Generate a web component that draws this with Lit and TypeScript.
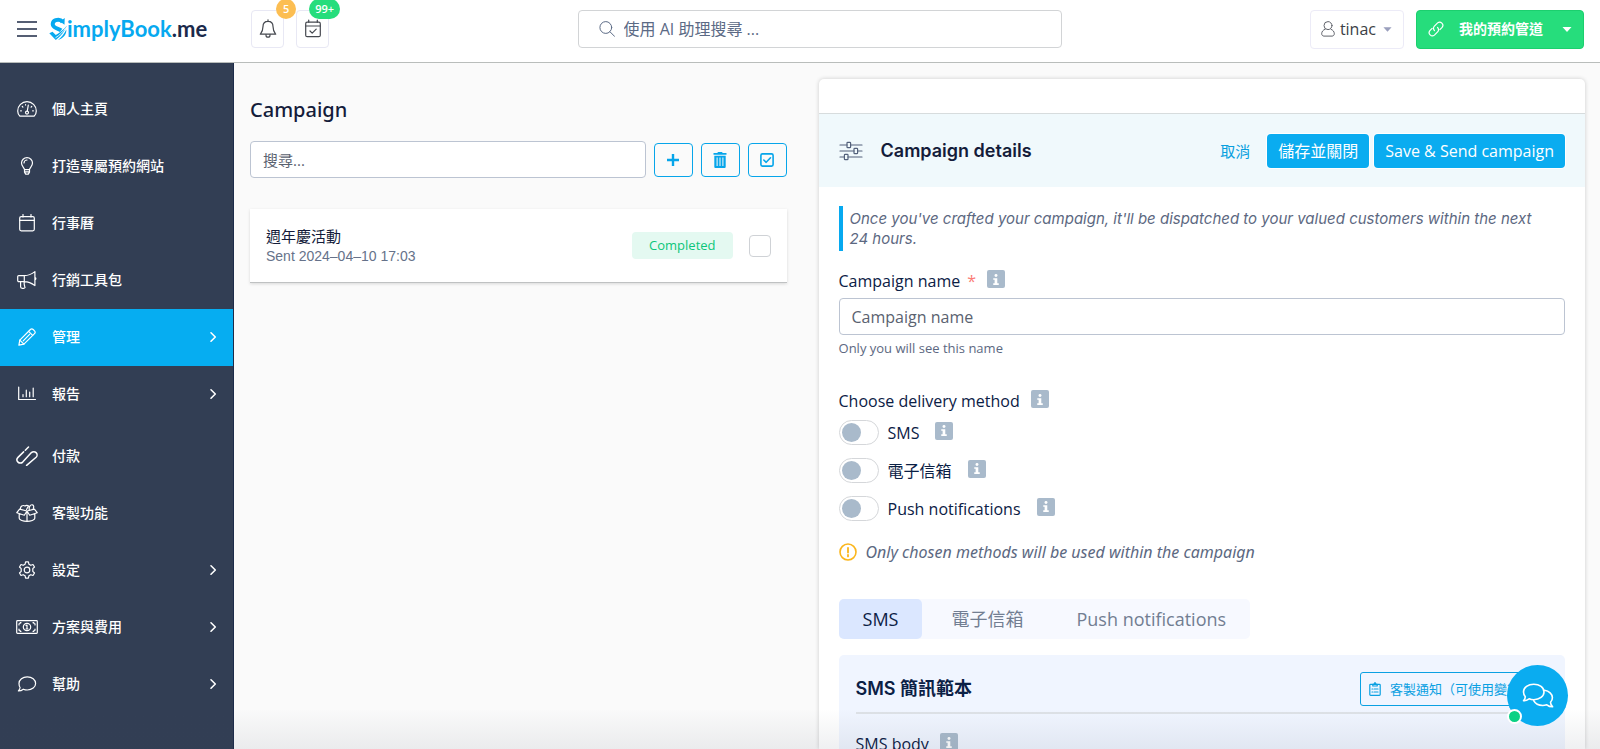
import { LitElement, html, css, svg, nothing } from "lit";
import { customElement, state } from "lit/decorators.js";
import { classMap } from "lit/directives/class-map.js";

const icon = (viewBox: string, body: unknown, cls = "") =>
  html`<svg class=${`icon ${cls}`} viewBox=${viewBox} aria-hidden="true">${body}</svg>`;

const icons = {
  gauge: icon("0 0 20 16", svg`
    <path d="M3 15.2C1.5 13.8 .7 12 .7 9.9a9.3 9.3 0 0 1 18.6 0c0 2.100-.8 3.900-2.300 5.300z"/>
    <path d="M11.300 4.200 10.300 10"/><circle cx="10" cy="11.600" r="1.500"/>
    <path d="M3.600 9.800h.8M15.600 9.800h.8M5.300 5.500l.6.6M8.600 3.700v.4M14.700 5.500l-.6.6"/>`),
  bulb: icon("0 0 20 18", svg`
    <path d="M7.500 12.600c0-1.900-3-3.200-3-6.500a5.500 5.500 0 0 1 11 0c0 3.300-3 4.600-3 6.500z"/>
    <path d="M7.500 12.600v2.500l1.200 2h2.600l1.200-2v-2.500M7.500 14.800h5M7 6a3 3 0 0 1 3-3"/>`),
  calendar: icon("0 0 20 18", svg`
    <rect x="2.700" y="2.600" width="14.600" height="14.200" rx="1.500"/><path d="M2.700 6.300h14.600M6 .5v2.500M14 .5v2.500"/>`),
  horn: icon("0 0 20 18", svg`
    <path d="M1.700 4.600h5.600c4 0 7.500-1.600 10.600-4v14c-3.100-2.400-6.600-4-10.600-4H1.700c-.6 0-1-.5-1-1V5.600c0-.6.4-1 1-1zM7.300 4.600v6M3.600 10.600v5.200c0 1 .8 1.500 1.700 1.500h1.500c1 0 1.500-.8 1-1.600-.6-1.500-.8-3.400-.5-5.100M17.900 6.300c1.300.3 1.300 2.300 0 2.600"/>`),
  pencil: icon("0 0 18 18", svg`
    <path d="M.9 17.100l.9-5L12.400 1.500a2 2 0 0 1 2.800 0l1.300 1.300a2 2 0 0 1 0 2.800L5.900 16.200z"/>
    <path d="M10.600 3.300l4.100 4.100M1.800 12.100l4.100 4.100M5.200 12.800l6.400-6.400"/>`),
  chart: icon("0 0 20 16", svg`
    <path d="M1.700 1v12.500h16.800"/><path d="M6 10.700V8.500M9.300 10.700V4.200M12.700 10.700V6M16.200 10.700V2"/>`),
  clip: icon("0 0 22 20", svg`
    <path class="bold" d="M12.500 1 9.300 4.200M7.600 5.900 2 11.400a3.300 3.300 0 0 0 4.700 4.700L15.400 6.600a3.300 3.300 0 0 1 4.700 4.700L10.600 19.400"/>`, "wide"),
  gift: icon("0 0 22 18", svg`
    <path d="M11 7 3.600 5.200.8 8.700l7.500 2.500zM11 7l7.400-1.800 2.800 3.500-7.500 2.500zM11 7v10.300M3.200 9.800v4.500c0 1.800 4 3 7.800 3s7.800-1.200 7.800-3V9.800"/>
    <path d="M4.500 5.300C4 2.500 6.800.6 9 2c1-.9 2.600-1 3.500 0l-2 3.500M13.300 5.800c-.6-2.800 1-5.300 3-5 1.500.3 1.700 2 1 3.700"/>`, "wide"),
  gear: icon("0 0 18 18", svg`
    <path d="M7.600.9h2.800l.5 2.300 1.900 1.100 2.200-.8 1.500 2.500-1.700 1.600v2.800l1.700 1.600-1.500 2.500-2.200-.8-1.900 1.100-.5 2.300H7.600l-.5-2.300-1.900-1.100-2.200.8L1.500 12l1.700-1.600V7.600L1.500 6 3 3.500l2.200.8 1.900-1.100z"/>
    <circle cx="9" cy="9" r="2.800"/>`),
  money: icon("0 0 22 14", svg`
    <rect x=".7" y=".7" width="20.600" height="12.600" rx=".8"/><circle cx="11" cy="7" r="3.700"/>
    <path d="M11 9V5l-1 .5M10 9h2M3 5V3.800c.8 0 1.200-.4 1.200-1.100H5M19 5V3.800c-.8 0-1.200-.4-1.200-1.100H17M3 9v1.200c.8 0 1.200.4 1.200 1.100H5M19 9v1.200c-.8 0-1.200.4-1.200 1.100H17"/>`, "wide"),
  bubble: icon("0 0 20 16", svg`
    <path d="M10.300.8c4.700 0 8.300 2.900 8.300 6.600S15 14 10.300 14c-1.500 0-2.800-.3-4-.8-1.300 1.100-3 1.700-4.900 1.700 1-1 1.600-2.200 1.700-3.400C2.300 10.300 2 8.900 2 7.400 2 3.700 5.600.8 10.300.8z"/>`),
  chevron: icon("0 0 8 12", svg`<path class="mid" d="M2 1.800 6.300 6 2 10.200"/>`, "chev"),
  burger: icon("0 0 20 18", svg`<path d="M0 2h20M0 9h20M0 16h20"/>`, "burger"),
  bell: icon("0 0 18 20", svg`
    <path d="M9 2.300c-3.200 0-5 2.200-5 5.200 0 4.500-1.500 6.200-2.700 7.700h15.400C15.500 13.700 14 12 14 7.500c0-3-1.800-5.200-5-5.200zM9 .8v1.500M7 16.200a2 2 0 0 0 4 0"/>`),
  calCheck: icon("0 0 18 20", svg`
    <rect x="1.700" y="3.200" width="14.600" height="14.500" rx="1.500"/><path d="M1.700 7h14.600M4.700 1v2.200M13.300 1v2.200M6 12l2.200 2.200 4-4"/>`),
  search: icon("0 0 16 16", svg`<circle cx="6.800" cy="6.500" r="5.900"/><path d="M11 10.800 15.600 15.400"/>`, "thin"),
  user: icon("0 0 14 16", svg`
    <circle cx="7" cy="4.600" r="4"/><path d="M4 8.300C2 9 .7 10.600.7 12.800c0 1.400 1 2.300 2.300 2.300h8c1.300 0 2.300-.9 2.300-2.300 0-2.200-1.300-3.800-3.300-4.500"/>`, "thin"),
  link: icon("0 0 16 16", svg`
    <path d="M6.400 9.500a3.100 3.100 0 0 1 0-4.400l3.200-3.200a3.200 3.200 0 0 1 4.500 4.500l-2.200 2.200M9.600 6.500a3.100 3.100 0 0 1 0 4.400l-3.200 3.200a3.200 3.200 0 0 1-4.500-4.500l2.200-2.200"/>`),
  caret: icon("0 0 10 5", svg`<path class="fill" d="M.5 0h9L5 5z"/>`, "caret"),
  plus: icon("0 0 14 14", svg`<path class="fill" d="M5.800 1h2.400v4.800H13v2.400H8.200V13H5.800V8.200H1V5.800h4.800z"/>`),
  trash: icon("0 0 14 16", svg`
    <path class="fill" fill-rule="evenodd" d="M.5 1h3.800L5 0h4l.7 1h3.800v1.800H.5zM1.300 3.700h11.400v11c0 .8-.5 1.300-1.300 1.300H2.600c-.8 0-1.300-.5-1.300-1.300zM3.600 5.500v8.500h1V5.500zM6.500 5.500v8.500h1V5.500zM9.400 5.500v8.500h1V5.500z"/>`),
  tick: icon("0 0 14 14", svg`<rect class="mid" x=".9" y=".9" width="12.200" height="12.200" rx="1.500"/><path class="mid" d="M3.800 7l2.400 2.300 4.300-4.500"/>`),
  sliders: icon("0 0 22 20", svg`
    <path d="M0 4h7M11 4h11M0 10h14M18 10h4M0 16h4M8 16h14"/>
    <rect x="7" y="1.300" width="3.600" height="5.400" rx=".8"/><rect x="14" y="7.300" width="3.600" height="5.400" rx=".8"/><rect x="4.400" y="13.300" width="3.600" height="5.400" rx=".8"/>`),
  alert: icon("0 0 18 18", svg`<circle class="mid" cx="9" cy="9" r="8"/><path class="heavy" d="M9 4.800v4.700M9 11.800v1.600"/>`),
  clipboard: icon("0 0 12 14", svg`
    <rect x=".8" y="2.300" width="10.400" height="11" rx=".8"/><path d="M3.800 2.300V4h4.400V2.300M5 1.800 6 .6l1 1.200M3 7h.8M5.200 7h3.800M3 10h.8M5.200 10h3.800"/>`),
  chat: icon("0 0 32 26", svg`
    <path class="mid" d="M11.800 1.200C17.500 1.200 22 4.700 22 9s-4.500 7.700-10.200 7.700c-1.700 0-3.300-.3-4.700-.9-1.500 1.100-3.500 1.900-5.600 1.900 1.200-1.200 1.800-2.600 1.800-4C2.100 12.400 1.500 10.800 1.500 9c0-4.300 4.600-7.800 10.300-7.800z"/>
    <path class="mid" d="M22.500 7.300C27 8 30.400 11 30.400 14.700c0 1.700-.7 3.300-1.900 4.500 0 1.400.7 3.100 2.100 4.600-2.300 0-4.400-.8-5.800-2-1.300.4-2.700.7-4.100.7-4 0-7.500-2-9-4.800"/>`),
};

interface NavItem { label: string; glyph: unknown; more?: boolean; active?: boolean }

const primaryNav: NavItem[] = [
  { label: "個人主頁", glyph: icons.gauge },
  { label: "打造專屬預約網站", glyph: icons.bulb },
  { label: "行事曆", glyph: icons.calendar },
  { label: "行銷工具包", glyph: icons.horn },
  { label: "管理", glyph: icons.pencil, more: true, active: true },
  { label: "報告", glyph: icons.chart, more: true },
];
const secondaryNav: NavItem[] = [
  { label: "付款", glyph: icons.clip },
  { label: "客製功能", glyph: icons.gift },
  { label: "設定", glyph: icons.gear, more: true },
  { label: "方案與費用", glyph: icons.money, more: true },
  { label: "幫助", glyph: icons.bubble, more: true },
];
const methods = ["SMS", "電子信箱", "Push notifications"];

const info = (about: string) => html`
  <button class="info" type="button" aria-label=${about}>
    <svg class="info-glyph" viewBox="0 0 8 12" aria-hidden="true">
      <circle cx="4" cy="1.700" r="1.600"/><path d="M1 4.500h4.400v5.500H7V12H1v-2h1.500V6.400H1z"/>
    </svg>
  </button>`;

@customElement("app-root")
export class AppRoot extends LitElement {
  @state() private tab = 0;

  static styles = css`
    :host {
      display: flex; flex-direction: column; height: 100vh; overflow: hidden;
      position: relative; background: #fafafa; color: #0b2045;
      font: 16px/20px "Open Sans", "Noto Sans CJK TC", sans-serif;
    }
    *, *::before { box-sizing: border-box; }
    button, input { font: inherit; color: inherit; margin: 0; }
    button { cursor: pointer; padding: 0; background: none; border: 0; }
    a { text-decoration: none; color: inherit; }
    h1, h2, h3, p, ul { margin: 0; padding: 0; font-weight: 500; }
    .icon { display: block; flex: none; fill: none; stroke: currentColor; stroke-width: 1.200; stroke-linecap: round; stroke-linejoin: round; }
    .icon .fill { fill: currentColor; stroke: none; }
    .icon .mid { stroke-width: 1.600; }
    .icon .heavy { stroke-width: 1.800; }
    .icon .bold { stroke-width: 1.500; }
    .thin { stroke-width: 1; }

    .top {
      flex: none; display: flex; align-items: center; justify-content: space-between;
      height: 63px; padding: 0 16px 4px 17px; background: #fff; border-bottom: 1px solid #b9bdbb;
    }
    .group { display: flex; align-items: center; }
    .burger { width: 20px; height: 18px; stroke-width: 1.500; color: #1e2a45; stroke-linecap: butt; }
    .brand { display: flex; align-items: center; margin: 0 44px 0 12px; font: 700 22px/26px Lato, sans-serif; color: #1b2a4b; }
    .brand-mark { width: 18px; height: 26px; }
    .brand-blue { color: #06a9f0; }
    .tool { position: relative; display: grid; place-items: center; width: 33px; height: 38px; margin-right: 12px; border: 1px solid #e8e8f4; border-radius: 4px; color: #45484f; }
    .tool:last-child { margin-right: 0; }
    .tool .icon { width: 18px; height: 20px; }
    .count { position: absolute; left: 24px; top: -12px; min-width: 20px; height: 20px; padding: 0 6px; border-radius: 10px; background: #fcbe52; color: #fff; font-size: 11px; line-height: 20px; font-weight: 600; }
    .count.green { left: 12px; background: #26dd7c; }
    .search { display: flex; align-items: center; gap: 9px; flex: 0 1 484px; height: 38px; padding: 0 20px; background: #fff; border: 1px solid #d2d4d6; border-radius: 4px; color: #5b6a85; }
    .search .icon { width: 16px; height: 16px; }
    .search-input { flex: 1; min-width: 0; border: 0; outline: 0; padding: 0; background: none; }
    .search-input::placeholder { color: #5b6a85; opacity: 1; }
    .account { display: flex; align-items: center; gap: 5px; height: 39px; padding: 0 11px 0 10px; border: 1px solid #ecebf7; border-radius: 4px; color: #3c3f46; margin-right: 12px; }
    .account .icon { width: 14px; height: 16px; color: #60636b; }
    .book .icon { width: 16px; height: 16px; }
    .account .caret, .book .caret { width: 9px; height: 5px; color: #9a9fbd; margin-left: 2px; }
    .book { display: flex; align-items: center; gap: 15px; height: 39px; padding: 0 11px; border-radius: 4px; background: #26dd7c; border: 1px solid #1ccf6e; color: #fff; font-size: 14px; font-weight: 700; }
    .book .caret { color: #fff; width: 10px; margin-left: 4px; }

    .body { flex: 1; min-height: 0; display: flex; }
    .side { flex: none; width: 234px; padding-top: 18px; background: #323e54; border-right: 1px solid #1d2b49; color: #fff; font-size: 14px; font-weight: 500; }
    .nav { list-style: none; }
    .nav + .nav { margin-top: 5px; }
    .nav-link { display: flex; align-items: center; gap: 14px; height: 57px; padding: 0 16px 1px; }
    .nav-link.active { background: #06adf1; }
    .nav-icon { display: grid; place-items: center; width: 22px; }
    .nav-icon .icon { width: 20px; height: 18px; }
    .nav-icon .wide { width: 22px; height: 20px; }
    .nav-label { flex: 1; }
    .chev { width: 8px; height: 12px; }

    .main { flex: 1; min-width: 0; display: flex; gap: 32px; padding: 16px 15px 0 16px; }
    .list { flex: 7 1 0; min-width: 0; padding-top: 17px; }
    .title { font: 500 20px/28px "Noto Sans", sans-serif; color: #141c3a; }
    .filters { display: flex; align-items: center; gap: 8px; margin: 17px 0 31px; }
    .field { width: 100%; min-width: 0; height: 37px; padding: 0 12px; border: 1px solid #bcc4d2; border-radius: 4px; background: #fff; outline: 0; }
    .field::placeholder { color: #5a6270; opacity: 1; }
    .filter-field { flex: 1; font-size: 15px; }
    .square { display: grid; place-items: center; flex: none; width: 39px; height: 34px; border: 1px solid #06a5ea; border-radius: 4px; color: #06a5ea; }
    .square .icon { width: 14px; height: 16px; }
    .card { display: flex; align-items: center; gap: 16px; height: 74px; padding: 0 16px; background: #fff; border-bottom: 1px solid #bfc1c2; box-shadow: 0 1px 3px #00000022; }
    .card-text { flex: 1; }
    .card-name { font-size: 15px; line-height: 20px; color: #141c3a; font-weight: 400; }
    .card-date { font: 14px/20px "Liberation Sans", sans-serif; color: #66728a; }
    .status { padding: 0 17px; border-radius: 4px; background: #e4f9f1; color: #0cc67a; font-size: 13px; line-height: 27px; }
    .check { appearance: none; width: 22px; height: 22px; border: 1px solid #cfd2d6; border-radius: 4px; background: #fff; }

    .details { flex: 10 1 0; min-width: 0; background: #fff; border-radius: 5px 5px 0 0; box-shadow: 0 0 4px #00000030; }
    .strip { height: 35px; border-bottom: 1px solid #d7dcdd; }
    .details-head { display: flex; align-items: center; height: 73px; padding: 0 20px; background: #f0f9fc; }
    .details-head .icon { width: 24px; height: 20px; color: #53617b; }
    .details-title { flex: 1; margin-left: 18px; font: 600 18px/24px Inter, sans-serif; color: #141c3a; }
    .cancel { color: #079fdf; font-size: 15px; margin-right: 17px; }
    .solid { height: 34px; padding: 0 11px; border-radius: 4px; background: #0aacf0; color: #fff; box-shadow: 0 0 0 1px #fff; }
    .solid + .solid { margin-left: 5px; }
    .form { padding: 19px 20px 0; }
    .note { margin-bottom: 19px; padding: 3px 20px 2px 7px; border-left: 4px solid #06a9f0; font: italic 400 15px/20px Inter, sans-serif; color: #5c6881; }
    .label-row { display: flex; align-items: center; height: 22px; }
    .star { margin-left: 7px; color: #fb7c75; }
    .info { display: grid; place-items: center; flex: none; width: 18px; height: 18px; margin: 0 0 4px 16px; border-radius: 2px; background: #a9bacb; }
    .label-row .info { margin-left: 11px; }
    .info-glyph { width: 8px; height: 11px; fill: #fff; }
    .label-row + .field { margin-top: 6px; }
    .help { margin: 3px 0 32px; font-size: 13px; font-weight: 400; color: #5c6881; }
    .choices { display: grid; gap: 13px; margin: 8px 0 21px; }
    .choice { display: flex; align-items: center; height: 25px; }
    .toggle { appearance: none; flex: none; width: 40px; height: 25px; margin-right: 9px; padding: 2px; border: 1px solid #d5d7da; border-radius: 13px; background: #fff; }
    .toggle::before { content: ""; display: block; width: 19px; height: 19px; border-radius: 50%; background: #a9bacb; }
    .toggle:checked { background: #06a9f0; }
    .toggle:checked::before { margin-left: auto; background: #fff; }
    .warn { display: flex; align-items: center; gap: 9px; font: italic 400 16px/20px "Noto Sans", sans-serif; color: #5c6881; }
    .warn .icon { width: 18px; height: 18px; color: #fbb61c; }
    .tabs { display: flex; width: max-content; margin: 37px 0 16px; border-radius: 5px; background: #f7f9ff; font-size: 18px; color: #727e92; }
    .tab { height: 40px; padding: 0 24px; border-radius: 5px; }
    .tab + .tab { padding-left: 29px; }
    .tab.on { background: #dbe7ff; color: #0b2045; }
    .template { height: 240px; padding: 0 17px; border-radius: 5px; background: #f0f5ff; }
    .template-head { display: flex; align-items: center; justify-content: space-between; height: 59px; padding-top: 10px; border-bottom: 2px solid #dde1e6; margin-bottom: 19px; }
    .template-title { font: 600 18px/24px Inter, "Noto Sans CJK TC", sans-serif; color: #0b2045; }
    .outline { display: flex; align-items: center; gap: 9px; height: 34px; padding: 0 14px 0 8px; border: 1px solid #0aa0e2; border-radius: 3px; color: #0aa0e2; font-size: 13px; }
    .outline .icon { width: 12px; height: 14px; }

    .haze { position: absolute; inset: auto 0 0 0; height: 40px; background: linear-gradient(#33405500, #33405514); pointer-events: none; }
    .chat { position: absolute; right: 32px; bottom: 23px; display: grid; place-items: center; width: 61px; height: 61px; border-radius: 50%; background: #0aacf0; color: #fff; }
    .chat .icon { width: 32px; height: 26px; }
    .online { position: absolute; left: 0; bottom: 2px; width: 15px; height: 15px; border-radius: 50%; border: 2px solid #fff; background: #0ad184; }
  `;

  private nav(items: NavItem[]) {
    return html`<ul class="nav">${items.map((i) => html`
      <li><a class=${classMap({ "nav-link": true, active: !!i.active })} href="#">
        <span class="nav-icon">${i.glyph}</span>
        <span class="nav-label">${i.label}</span>
        ${i.more ? icons.chevron : nothing}
      </a></li>`)}</ul>`;
  }

  render() {
    return html`
      <header class="top">
        <div class="group">
          <button type="button" aria-label="選單">${icons.burger}</button>
          <a class="brand" href="#" aria-label="SimplyBook.me">
            <svg class="brand-mark" viewBox="0 0 18 26" aria-hidden="true">
              <path fill="none" stroke="#06a9f0" stroke-width="4" d="M13.600 6C12 3.900 9.200 3.300 6.700 4.200 3.200 5.500 2.900 9.200 5.300 11c2 1.600 5 2 6.800 3.400"/>
              <path fill="#06a9f0" d="M11 5.600 15.700 2l-.2 6.800zM.3 17.300l3.200-1.600 3.300 3.200c3.800-2.300 7.500-5 11-9.200-1.800 5.200-5.500 10-11 14.300z"/>
              <path fill="none" stroke="#fff" stroke-width=".9" d="M6.500 21.800c4.300-2.800 7.800-6.200 10.800-10.600"/>
              <path fill="#06a9f0" d="M17.300 13.500c.5 4.300-2.500 8.600-8.300 10.500 3.600-3 6.300-6.300 8.300-10.500z"/>
            </svg>
            <span class="brand-blue">implyBook</span><span>.me</span>
          </a>
          <button class="tool" type="button" aria-label="通知">${icons.bell}<span class="count">5</span></button>
          <button class="tool" type="button" aria-label="預約">${icons.calCheck}<span class="count green">99+</span></button>
        </div>
        <label class="search">${icons.search}
          <input class="search-input" type="text" aria-label="搜尋" placeholder="使用 AI 助理搜尋 ..." />
        </label>
        <div class="group">
          <button class="account" type="button">${icons.user}<span>tinac</span>${icons.caret}</button>
          <button class="book" type="button">${icons.link}<span>我的預約管道</span>${icons.caret}</button>
        </div>
      </header>
      <div class="body">
        <nav class="side">${this.nav(primaryNav)}${this.nav(secondaryNav)}</nav>
        <main class="main">
          <section class="list">
            <h1 class="title">Campaign</h1>
            <div class="filters">
              <input class="field filter-field" type="text" aria-label="搜尋" placeholder="搜尋..." />
              <button class="square" type="button" aria-label="新增">${icons.plus}</button>
              <button class="square" type="button" aria-label="刪除">${icons.trash}</button>
              <button class="square" type="button" aria-label="全選">${icons.tick}</button>
            </div>
            <article class="card">
              <div class="card-text">
                <h2 class="card-name">週年慶活動</h2>
                <div class="card-date">Sent 2024–04–10 17:03</div>
              </div>
              <span class="status">Completed</span>
              <input class="check" type="checkbox" aria-label="週年慶活動" />
            </article>
          </section>
          <section class="details">
            <div class="strip"></div>
            <div class="details-head">
              ${icons.sliders}
              <h2 class="details-title">Campaign details</h2>
              <button class="cancel" type="button">取消</button>
              <button class="solid" type="button">儲存並關閉</button>
              <button class="solid" type="button">Save &amp; Send campaign</button>
            </div>
            <form class="form">
              <p class="note">Once you've crafted your campaign, it'll be dispatched to your valued customers within the next 24 hours.</p>
              <div class="label-row"><label for="name">Campaign name</label><span class="star">*</span>${info("Campaign name")}</div>
              <input class="field" id="name" type="text" placeholder="Campaign name" />
              <p class="help">Only you will see this name</p>
              <div class="label-row"><span>Choose delivery method</span>${info("Choose delivery method")}</div>
              <div class="choices">
                ${methods.map((m, i) => html`<div class="choice">
                  <input class="toggle" type="checkbox" role="switch" id=${`m${i}`} />
                  <label for=${`m${i}`}>${m}</label>${info(m)}
                </div>`)}
              </div>
              <p class="warn">${icons.alert}<span>Only chosen methods will be used within the campaign</span></p>
              <div class="tabs" role="tablist">
                ${methods.map((m, i) => html`<button type="button" role="tab" aria-selected=${this.tab === i}
                  class=${classMap({ tab: true, on: this.tab === i })} @click=${() => (this.tab = i)}>${m}</button>`)}
              </div>
              <div class="template">
                <div class="template-head">
                  <h3 class="template-title">SMS 簡訊範本</h3>
                  <button class="outline" type="button">${icons.clipboard}<span>客製通知（可使用變數）</span></button>
                </div>
                <div class="label-row"><span>SMS body</span>${info("SMS body")}</div>
              </div>
            </form>
          </section>
        </main>
      </div>
      <div class="haze"></div>
      <button class="chat" type="button" aria-label="Chat">${icons.chat}<span class="online"></span></button>
    `;
  }
}
